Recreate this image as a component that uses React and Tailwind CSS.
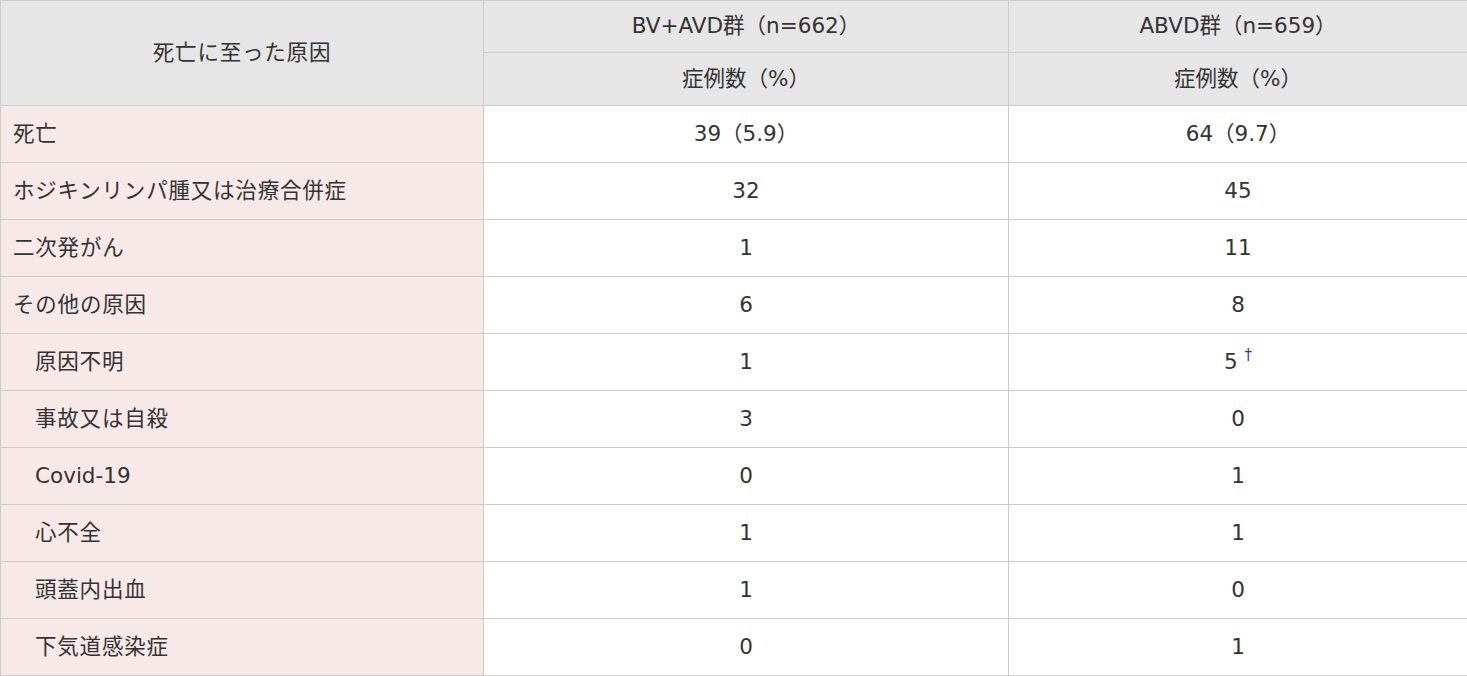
export default function App() {
  const rows = [
    { label: "死亡", a: "39（5.9）", b: "64（9.7）" },
    { label: "ホジキンリンパ腫又は治療合併症", a: "32", b: "45" },
    { label: "二次発がん", a: "1", b: "11" },
    { label: "その他の原因", a: "6", b: "8" },
    { label: "原因不明", a: "1", b: "5", dagger: true, indent: true },
    { label: "事故又は自殺", a: "3", b: "0", indent: true },
    { label: "Covid-19", a: "0", b: "1", indent: true, latin: true },
    { label: "心不全", a: "1", b: "1", indent: true },
    { label: "頭蓋内出血", a: "1", b: "0", indent: true },
    { label: "下気道感染症", a: "0", b: "1", indent: true },
  ];
  return (
    <div
      className="w-[1467px] bg-white text-[#333] text-[21.5px]"
      style={{ fontFamily: '"DejaVu Sans", "Noto Sans CJK JP", sans-serif' }}
    >
      <table className="w-[1467px] border-collapse table-fixed">
        <colgroup>
          <col className="w-[483px]" />
          <col className="w-[525px]" />
          <col className="w-[459px]" />
        </colgroup>
        <thead>
          <tr className="h-[52px]">
            <th
              rowSpan={2}
              className="border border-[#cccccc] bg-[#e5e6e5] font-normal text-center align-middle tracking-[0.8px]"
            >
              死亡に至った原因
            </th>
            <th className="border border-[#cccccc] bg-[#e5e6e5] font-normal text-center align-middle">
              BV+AVD群（n=662）
            </th>
            <th className="border border-[#cccccc] bg-[#e5e6e5] font-normal text-center align-middle">
              ABVD群（n=659）
            </th>
          </tr>
          <tr className="h-[53px]">
            <th className="border border-[#cccccc] bg-[#e5e6e5] font-normal text-center align-middle">
              症例数（%）
            </th>
            <th className="border border-[#cccccc] bg-[#e5e6e5] font-normal text-center align-middle">
              症例数（%）
            </th>
          </tr>
        </thead>
        <tbody>
          {rows.map((r, i) => (
            <tr key={i} className="h-[57px]">
              <td
                className={
                  "border border-[#cccccc] bg-[#f7e9e8] text-left align-middle " +
                  (r.indent ? "pl-[34px] " : "pl-[12px] ") +
                  (r.latin ? "" : "tracking-[0.8px]")
                }
              >
                {r.label}
              </td>
              <td className="border border-[#cccccc] text-center align-middle">{r.a}</td>
              <td className="border border-[#cccccc] text-center align-middle">
                {r.dagger ? (
                  <span>
                    5{" "}
                    <span className="relative top-[-9px] text-[15px] leading-none text-[#5b2a9e]">†</span>
                  </span>
                ) : (
                  r.b
                )}
              </td>
            </tr>
          ))}
        </tbody>
      </table>
    </div>
  );
}
